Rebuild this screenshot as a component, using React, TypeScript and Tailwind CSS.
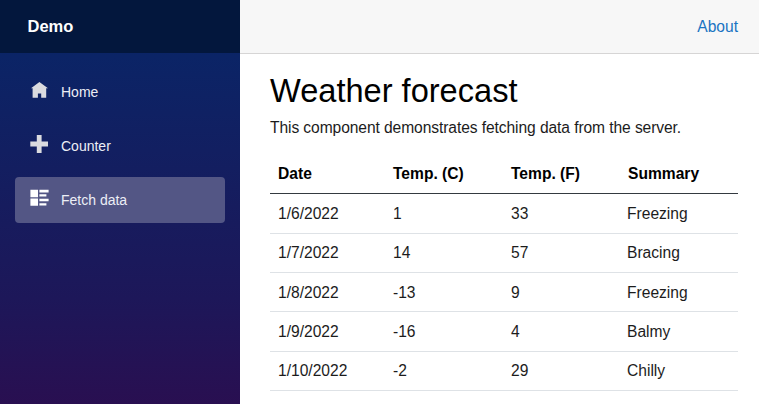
const rows = [
  ["1/6/2022", "1", "33", "Freezing"],
  ["1/7/2022", "14", "57", "Bracing"],
  ["1/8/2022", "-13", "9", "Freezing"],
  ["1/9/2022", "-16", "4", "Balmy"],
  ["1/10/2022", "-2", "29", "Chilly"],
];

function HomeIcon() {
  return (
    <svg className="h-[18px] w-[18px]" viewBox="0 0 18 18" fill="currentColor">
      <path d="M9.4 1 18 7.2H16.2V16.7H11.2V12.6H7.9V16.7H2.6V7.2H1Z" />
    </svg>
  );
}

function PlusIcon() {
  return (
    <svg className="h-[18px] w-[18px]" viewBox="0 0 18 18" fill="currentColor">
      <path d="M6.8 0h4.8v6.4h6.6v5h-6.6V18H6.8v-6.6H.3v-5h6.5Z" />
    </svg>
  );
}

function ListIcon() {
  return (
    <svg className="h-[18px] w-[19px]" viewBox="0 0 19 18" fill="currentColor">
      <path d="M.4 .8h7.6v7.4H.4zM.4 9.4h7.6v7.4H.4zM9.4 .8h9.2v2.6H9.4zM9.4 5.2h7v2.4h-7zM9.4 9.8h9.2v2.4H9.4zM9.4 14.2h7v2.4h-7z" />
    </svg>
  );
}

const links = [
  { label: "Home", icon: <HomeIcon />, active: false },
  { label: "Counter", icon: <PlusIcon />, active: false },
  { label: "Fetch data", icon: <ListIcon />, active: true },
];

export default function App() {
  return (
    <div className="flex h-[404px] w-[759px] overflow-hidden bg-white font-['Liberation_Sans',Arial,sans-serif] text-black">
      <aside className="flex h-[403.5px] w-60 shrink-0 flex-col bg-[linear-gradient(180deg,#052767_0%,#0b2466_14%,#1d1759_74%,#290f51_100%)]">
        <div className="flex h-[53px] items-center bg-[#03173d] pl-[27.5px] text-[16.5px] font-bold text-white">
          Demo
        </div>
        <nav className="flex flex-col gap-2 px-[15px] pt-[15.5px]">
          {links.map((l) => (
            <a
              key={l.label}
              className={`flex h-[46px] items-center rounded-[4px] pl-[15px] text-[14px] ${
                l.active ? "bg-[#535685] text-white" : "text-[#dadbdf]"
              }`}
            >
              <span className="mb-[4px] w-[31px]">{l.icon}</span>
              <span className="pt-[1px] text-[#eceef5]">{l.label}</span>
            </a>
          ))}
        </nav>
      </aside>
      <main className="min-w-0 flex-1">
        <header className="flex h-[53.5px] items-center justify-end border-b border-[#d6d5d5] bg-[#f7f7f7] pr-[21px] text-[15.6px] text-[#1a74c2]">
          About
        </header>
        <section className="pl-[30px] pr-[21px]">
          <h1 className="pt-[17.5px] text-[32.6px] leading-[40px]">Weather forecast</h1>
          <p className="pt-[4.5px] text-[15.6px] leading-6 tracking-[-0.085px] text-[#1c1c1c]">
            This component demonstrates fetching data from the server.
          </p>
          <table className="mt-[15px] w-full table-fixed border-collapse text-left text-[15.6px]">
            <colgroup>
              <col className="w-[115px]" />
              <col className="w-[118px]" />
              <col className="w-[116px]" />
              <col />
            </colgroup>
            <thead>
              <tr className="h-[39.3px] border-b border-[#343a40] font-bold">
                <th className="pl-[8px]">Date</th>
                <th className="pl-[8px]">Temp. (C)</th>
                <th className="pl-[8px]">Temp. (F)</th>
                <th className="pl-[9px]">Summary</th>
              </tr>
            </thead>
            <tbody>
              {rows.map((r) => (
                <tr key={r[0]} className="h-[39.4px] border-b border-[#dee2e6] text-[#1c1c1c]">
                  {r.map((c, i) => (
                    <td key={i} className="pl-[8px]">
                      {c}
                    </td>
                  ))}
                </tr>
              ))}
            </tbody>
          </table>
        </section>
      </main>
    </div>
  );
}
